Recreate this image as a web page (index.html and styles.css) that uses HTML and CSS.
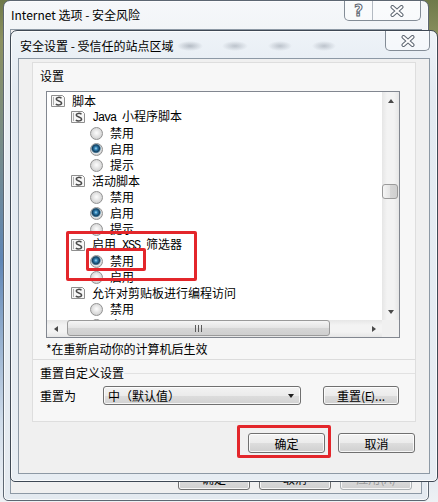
FILE: index.html
```html
<!DOCTYPE html>
<html lang="zh-CN">
<head>
    <meta charset="UTF-8">
    <meta name="viewport" content="width=device-width, initial-scale=1.0">
    <title>安全设置 - 受信任的站点区域</title>
    <link rel="stylesheet" href="styles.css">
</head>
<body>
    <svg class="defs" width="0" height="0">
        <symbol id="scr" viewBox="0 0 16 14">
            <path d="M1.5 1.5h11l2 2v9h-13z" fill="#f7f7f7" stroke="#8e8e8e"/>
            <path d="M3.5 3v8" stroke="#b0b0b0"/>
            <path d="M11.5 4.3C10 2.9 6.2 3 6.2 5.1c0 2.2 5.4 1.6 5.4 4 0 2.1-4 2.3-5.8 1" fill="none" stroke="#4a4a4a" stroke-width="1.5"/>
        </symbol>
        <symbol id="cross" viewBox="0 0 14 12">
            <path d="M2.5 2l9 8M11.5 2l-9 8" stroke="#5d6671" stroke-width="4" stroke-linecap="round"/>
            <path d="M2.5 2l9 8M11.5 2l-9 8" stroke="#fff" stroke-width="2" stroke-linecap="round"/>
        </symbol>
    </svg>

    <div class="desktop">
        <!-- window behind -->
        <div class="window outer">
            <div class="titlebar">
                <span class="title">Internet 选项 - 安全风险</span>
                <div class="caption-btns">
                    <span class="cap-btn help">?</span>
                    <span class="cap-btn close"><svg width="14" height="12"><use href="#cross"/></svg></span>
                </div>
            </div>
            <div class="client outer-client">
                <div class="outer-actions">
                    <button class="btn wide">确定</button>
                    <button class="btn wide">取消</button>
                    <button class="btn wide" disabled>应用(A)</button>
                </div>
            </div>
        </div>

        <!-- security settings dialog -->
        <div class="window inner">
            <div class="titlebar inner-bar">
                <span class="title">安全设置 - 受信任的站点区域</span>
                <span class="cap-btn inner-close"><svg width="14" height="12"><use href="#cross"/></svg></span>
            </div>
            <div class="client inner-client">
                <div class="panel">
                    <div class="label">设置</div>
                    <div class="listbox">
                        <div class="tree">
                            <div class="node lv0"><svg class="ico"><use href="#scr"/></svg><span>脚本</span></div>
                            <div class="node lv1"><svg class="ico"><use href="#scr"/></svg><span><span class="asc">Java </span>小程序脚本</span></div>
                            <div class="node lv2"><span class="radio"></span><span>禁用</span></div>
                            <div class="node lv2"><span class="radio on"></span><span>启用</span></div>
                            <div class="node lv2"><span class="radio"></span><span>提示</span></div>
                            <div class="node lv1"><svg class="ico"><use href="#scr"/></svg><span>活动脚本</span></div>
                            <div class="node lv2"><span class="radio"></span><span>禁用</span></div>
                            <div class="node lv2"><span class="radio on"></span><span>启用</span></div>
                            <div class="node lv2"><span class="radio"></span><span>提示</span></div>
                            <div class="node lv1"><svg class="ico"><use href="#scr"/></svg><span>启用<span class="asc"> XSS </span>筛选器</span></div>
                            <div class="node lv2"><span class="radio on"></span><span>禁用</span></div>
                            <div class="node lv2"><span class="radio"></span><span>启用</span></div>
                            <div class="node lv1"><svg class="ico"><use href="#scr"/></svg><span>允许对剪贴板进行编程访问</span></div>
                            <div class="node lv2"><span class="radio"></span><span>禁用</span></div>
                            <div class="node lv2"><span class="radio"></span><span>启用</span></div>
                        </div>
                        <div class="vscroll">
                            <div class="sb-btn"><span class="arr up"></span></div>
                            <div class="sb-track"><div class="thumb v-thumb"></div></div>
                            <div class="sb-btn"><span class="arr down"></span></div>
                        </div>
                        <div class="hscroll">
                            <div class="sb-btn"><span class="arr left"></span></div>
                            <div class="sb-track h-track"><div class="thumb h-thumb"><span class="grip"></span></div></div>
                            <div class="sb-btn"><span class="arr right"></span></div>
                        </div>
                        <div class="corner"></div>
                        <div class="mark mark-xss"></div>
                        <div class="mark mark-off"></div>
                    </div>
                    <div class="note">*在重新启动你的计算机后生效</div>
                    <div class="sep"></div>
                    <div class="group-title">重置自定义设置</div>
                    <div class="reset-row">
                        <span class="reset-label">重置为</span>
                        <div class="combo">
                            <span>中（默认值）</span>
                            <span class="combo-arr"></span>
                        </div>
                        <button class="btn reset-btn">重置(<span class="asc">E</span>)...</button>
                    </div>
                </div>
                <div class="actions">
                    <span class="marked"><button class="btn dlg">确定</button></span>
                    <button class="btn dlg">取消</button>
                </div>
            </div>
        </div>
    </div>
</body>
</html>
```

FILE: styles.css
```css
* {
    box-sizing: border-box;
}
html, body {
    margin: 0;
    padding: 0;
}
body {
    width: 438px;
    height: 502px;
    overflow: hidden;
    font-family: "Noto Sans CJK SC", "Microsoft YaHei", sans-serif;
    font-size: 12px;
    color: #000;
    background: linear-gradient(#6f7a4a 0, #8c9160 40px, #5f86b6 260px, #cfdcea 420px, #eef1f4 502px);
}
.defs {
    position: absolute;
}
.desktop {
    position: relative;
    width: 438px;
    height: 502px;
}

/* window frames */
.window {
    position: absolute;
    display: flex;
    flex-direction: column;
    border: 1px solid #5d6772;
    border-radius: 7px 7px 5px 5px;
    box-shadow: inset 0 0 0 1px rgba(255,255,255,0.75);
}
.outer {
    left: 3px;
    top: 0;
    width: 426px;
    height: 501px;
    padding: 0 6px 6px;
    background: linear-gradient(#f6f8fa, #e9eef3 80px, #e4eaf0);
}
.inner {
    left: 10px;
    top: 30px;
    width: 428px;
    height: 452px;
    padding: 0 7px 7px;
    border-color: #3f4955;
    background: linear-gradient(#eef3f8, #e3eaf1 60px, #e7edf3);
}
.titlebar {
    display: flex;
    align-items: flex-start;
    flex: none;
    height: 28px;
    padding-top: 6px;
    line-height: 16px;
}
.titlebar .title {
    padding-left: 1px;
}
.inner-bar {
    height: 27px;
    padding-top: 7px;
    background:
        radial-gradient(ellipse 13px 5px at 172px 15px, rgba(80,90,105,0.35), transparent),
        radial-gradient(ellipse 13px 5px at 217px 15px, rgba(80,90,105,0.3), transparent),
        radial-gradient(ellipse 12px 5px at 262px 15px, rgba(80,90,105,0.3), transparent),
        radial-gradient(ellipse 12px 5px at 306px 15px, rgba(80,90,105,0.3), transparent);
}
.inner-bar .title {
    padding-left: 2px;
}
.caption-btns {
    display: flex;
    margin: -6px 1px 0 auto;
    height: 20px;
    border: 1px solid #838c96;
    border-top: none;
    border-radius: 0 0 5px 5px;
    background: rgba(255,255,255,0.45);
}
.cap-btn {
    display: flex;
    align-items: center;
    justify-content: center;
}
.help {
    width: 28px;
    border-right: 1px solid #b3bac2;
    font: bold 15px "DejaVu Sans", sans-serif;
    color: #fff;
    -webkit-text-stroke: 1px #5d6671;
}
.close {
    width: 47px;
}
.inner-close {
    margin: -7px 0 0 auto;
    width: 45px;
    height: 20px;
    border: 1px solid #838c96;
    border-top: none;
    border-radius: 0 0 5px 5px;
    background: rgba(255,255,255,0.5);
}

/* client areas */
.client {
    flex: 1;
    display: flex;
    flex-direction: column;
    background: #f0f0f0;
    border: 1px solid #8d99a5;
}
.outer-client {
    justify-content: flex-end;
}
.outer-actions {
    display: flex;
    justify-content: flex-end;
    gap: 9px;
    padding: 0 9px 3px;
}
.inner-client {
    padding: 3px 13px 0;
}
.panel {
    display: flex;
    flex-direction: column;
    border: 1px solid #dedede;
    background: #f7f7f7;
    padding-bottom: 16px;
}
.label {
    margin-top: 5px;
    padding-left: 7px;
    line-height: 16px;
}

/* tree list */
.listbox {
    position: relative;
    display: grid;
    grid-template-columns: 1fr 17px;
    grid-template-rows: 1fr 17px;
    width: 354px;
    height: 247px;
    margin: 7px 0 0 13px;
    border: 1px solid #828790;
    background: #fff;
}
.tree {
    overflow: hidden;
    padding-top: 1px;
}
.node {
    display: flex;
    align-items: center;
    height: 16px;
    line-height: 16px;
    white-space: nowrap;
}
.lv0 { padding-left: 3px; }
.lv1 { padding-left: 23px; }
.lv2 { padding-left: 43px; }
.ico {
    width: 16px;
    height: 14px;
    margin-right: 6px;
    flex: none;
}
.asc {
    font-family: "Liberation Mono", monospace;
    font-size: 12px;
    letter-spacing: -1.2px;
    white-space: pre;
}
.radio {
    width: 13px;
    height: 13px;
    margin-right: 7px;
    flex: none;
    border-radius: 50%;
    border: 1px solid #929292;
    background: radial-gradient(circle at 50% 45%, #fdfdfd 0, #e8e8e8 3px, #d2d2d2 6px);
}
.radio.on {
    background: radial-gradient(circle at 45% 40%, #a8dbf5 0, #2f80b2 1.6px, #153f5e 3.6px, #5f8aa3 4.4px, #eaeaea 5.2px, #d2d2d2 6px);
}
.mark {
    position: absolute;
    border: 3px solid #e3262b;
    border-radius: 2px;
}
.mark-xss {
    left: 19px;
    top: 139px;
    width: 131px;
    height: 50px;
}
.mark-off {
    left: 39px;
    top: 156px;
    width: 60px;
    height: 23px;
}

/* scroll bars */
.vscroll, .hscroll {
    display: flex;
    background: linear-gradient(90deg, #e6e6e6, #f3f3f3 30%, #f3f3f3 70%, #e6e6e6);
}
.vscroll {
    flex-direction: column;
}
.hscroll {
    background: linear-gradient(#e6e6e6, #f3f3f3 30%, #f3f3f3 70%, #e6e6e6);
}
.sb-btn {
    width: 17px;
    height: 17px;
    flex: none;
    display: flex;
    align-items: center;
    justify-content: center;
}
.sb-track {
    flex: 1;
    padding-top: 75px;
}
.h-track {
    padding: 0 0 0 3px;
}
.thumb {
    border: 1px solid #9a9a9a;
    border-radius: 3px;
    background: linear-gradient(90deg, #f5f5f5, #e4e4e4 50%, #d6d6d6 51%, #cfcfcf);
}
.v-thumb {
    height: 15px;
    width: 16px;
}
.h-thumb {
    width: 263px;
    height: 16px;
    display: flex;
    align-items: center;
    justify-content: center;
    background: linear-gradient(#f5f5f5, #e4e4e4 50%, #d6d6d6 51%, #cfcfcf);
}
.grip {
    width: 7px;
    height: 7px;
    background: repeating-linear-gradient(90deg, #5a5a5a 0 1px, transparent 1px 3px);
}
.corner {
    background: #f0f0f0;
}
.arr {
    width: 0;
    height: 0;
    border: 3.5px solid transparent;
}
.arr.up { border-bottom: 4px solid #4a4a4a; border-top: none; }
.arr.down { border-top: 4px solid #4a4a4a; border-bottom: none; }
.arr.left { border-right: 4px solid #4a4a4a; border-left: none; }
.arr.right { border-left: 4px solid #4a4a4a; border-right: none; }

.note {
    margin-top: 3px;
    padding-left: 13px;
    line-height: 16px;
}
.sep {
    margin-top: 2px;
    height: 1px;
    background: #dcdcdc;
}
.group-title {
    display: flex;
    align-items: center;
    margin-top: 5px;
    padding-left: 7px;
    line-height: 16px;
}
.group-title::after {
    content: "";
    flex: 1;
    border-top: 1px solid #e2e2e2;
}
.reset-row {
    display: flex;
    align-items: center;
    margin-top: 5px;
    padding-left: 7px;
    height: 19px;
}
.reset-label {
    width: 63px;
}
.combo {
    display: flex;
    align-items: center;
    justify-content: space-between;
    width: 198px;
    height: 19px;
    padding: 0 6px 0 4px;
    border: 1px solid #707070;
    border-radius: 3px;
    background: linear-gradient(#f3f3f3, #ebebeb 50%, #dddddd 51%, #d2d2d2);
    box-shadow: inset 0 0 0 1px rgba(255,255,255,0.8);
}
.combo-arr {
    border: 3.5px solid transparent;
    border-top: 4px solid #1e1e1e;
    border-bottom: none;
}

/* buttons */
.btn {
    font: inherit;
    color: #000;
    height: 20px;
    padding: 0;
    border: 1px solid #707070;
    border-radius: 3px;
    background: linear-gradient(#f3f3f3, #ebebeb 50%, #dddddd 51%, #cfcfcf);
    box-shadow: inset 0 0 0 1px rgba(255,255,255,0.8);
}
.btn:disabled {
    color: #9a9a9a;
    border-color: #adb2b5;
}
.wide {
    width: 72px;
    height: 23px;
}
.reset-btn {
    width: 76px;
    margin-left: 22px;
    height: 19px;
}
.actions {
    display: flex;
    justify-content: flex-end;
    gap: 13px;
    margin-top: 11px;
    padding-right: 1px;
}
.dlg {
    width: 77px;
}
.marked {
    position: relative;
    display: flex;
}
.marked::after {
    content: "";
    position: absolute;
    left: -11px;
    right: -6px;
    top: -8px;
    bottom: -5px;
    border: 3px solid #e3262b;
    border-radius: 2px;
}
```
